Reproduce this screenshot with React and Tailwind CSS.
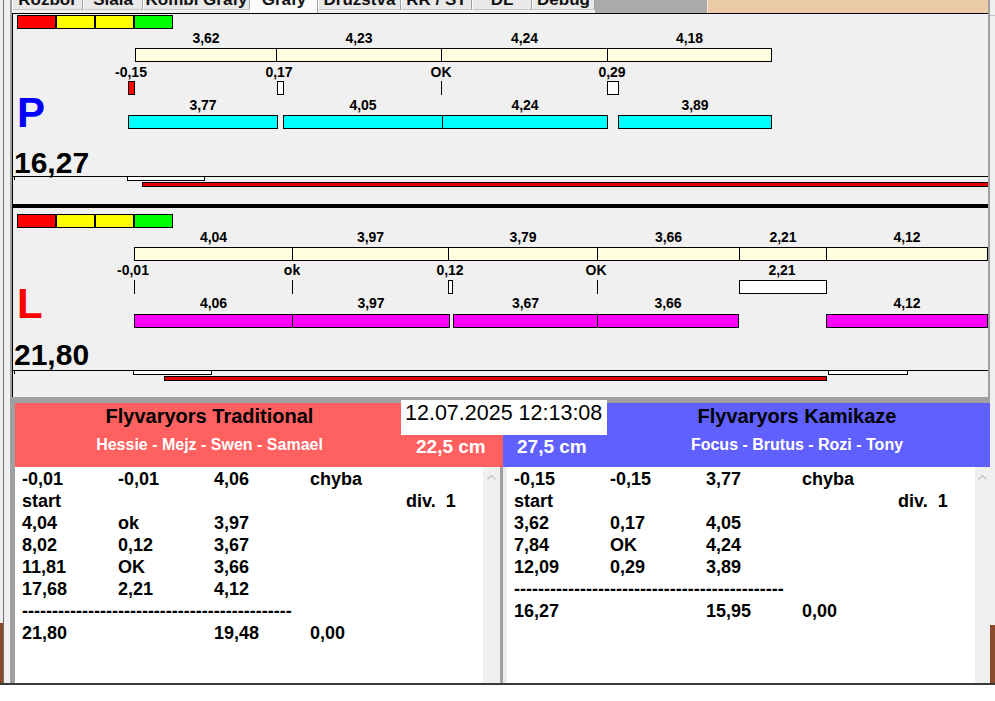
import React from 'react';

const FONT = "'Liberation Sans', Arial, sans-serif";

const TABS = [
  { label: 'Rozbor', w: 'w-[71px]' },
  { label: 'Siala', w: 'w-[60px]' },
  { label: 'Kombi Grafy', w: 'w-[107px]' },
  { label: 'Grafy', w: 'w-[68px]', active: true },
  { label: 'Družstva', w: 'w-[83px]' },
  { label: 'RR / ST', w: 'w-[71px]' },
  { label: 'DL', w: 'w-[60px]' },
  { label: 'Debug', w: 'w-[63px]' },
];

const SQUARES = ['#ff0000', '#ffff00', '#ffff00', '#00ff00'];

// chart lanes, coordinates are page pixels
const LANES = [
  {
    sq: 15,
    topLbl: 43,
    topBar: 48,
    top: [[135, 276, '3,62'], [276, 441, '4,23'], [441, 607, '4,24'], [607, 771, '4,18']],
    markLbl: 77,
    markY: 81,
    marks: [
      { cx: 131, label: '-0,15', box: [128, 134], fill: '#ff0000' },
      { cx: 279, label: '0,17', box: [277, 283], fill: '#ffffff' },
      { cx: 441, label: 'OK', line: 441 },
      { cx: 612, label: '0,29', box: [607, 618], fill: '#ffffff' },
    ],
    botLbl: 110,
    botBar: 115,
    bot: [[128, 277, '3,77'], [283, 442, '4,05'], [442, 607, '4,24'], [618, 771, '3,89']],
    fill: '#00ffff',
    letter: 'P',
    letterColor: '#0000ff',
    letterY: 127,
    total: '16,27',
    totalY: 173,
    lineY: 176,
    white: [[127, 204]],
    red: [142, 988],
  },
  {
    sq: 214,
    topLbl: 242,
    topBar: 247,
    top: [[134, 292, '4,04'], [292, 448, '3,97'], [448, 597, '3,79'], [597, 739, '3,66'], [739, 826, '2,21'], [826, 987, '4,12']],
    markLbl: 275,
    markY: 280,
    marks: [
      { cx: 133, label: '-0,01', line: 134 },
      { cx: 292, label: 'ok', line: 292 },
      { cx: 450, label: '0,12', box: [448, 452], fill: '#ffffff' },
      { cx: 596, label: 'OK', line: 597 },
      { cx: 782, label: '2,21', box: [739, 826], fill: '#ffffff' },
    ],
    botLbl: 308,
    botBar: 314,
    bot: [[134, 292, '4,06'], [292, 449, '3,97'], [453, 597, '3,67'], [597, 738, '3,66'], [826, 987, '4,12']],
    fill: '#ff00ff',
    letter: 'L',
    letterColor: '#ff0000',
    letterY: 318,
    total: '21,80',
    totalY: 365,
    lineY: 370,
    white: [[133, 211], [828, 907]],
    red: [164, 826],
  },
];

const LEFT_ROWS = [
  ['-0,01', '-0,01', '4,06', 'chyba', ''],
  ['start', '', '', '', 'div.  1'],
  ['4,04', 'ok', '3,97'],
  ['8,02', '0,12', '3,67'],
  ['11,81', 'OK', '3,66'],
  ['17,68', '2,21', '4,12'],
  'dash',
  ['21,80', '', '19,48', '0,00'],
];

const RIGHT_ROWS = [
  ['-0,15', '-0,15', '3,77', 'chyba', ''],
  ['start', '', '', '', 'div.  1'],
  ['3,62', '0,17', '4,05'],
  ['7,84', 'OK', '4,24'],
  ['12,09', '0,29', '3,89'],
  'dash',
  ['16,27', '', '15,95', '0,00'],
];

function Lane({ s }) {
  return (
    <g fontFamily={FONT} fontWeight="bold">
      {SQUARES.map((c, i) => (
        <rect key={i} x={17.5 + i * 39} y={s.sq + 0.5} width={38} height={13} fill={c} stroke="#000" />
      ))}

      {s.top.map(([a, b, t]) => (
        <g key={a}>
          <rect x={a + 0.5} y={s.topBar + 0.5} width={b - a} height={13} fill="#ffffe0" stroke="#000" />
          <text x={(a + b) / 2 + 0.5} y={s.topLbl} fontSize="14" textAnchor="middle" fill="#000">{t}</text>
        </g>
      ))}

      {s.marks.map((m) => (
        <g key={m.label + m.cx}>
          <text x={m.cx} y={s.markLbl} fontSize="14" textAnchor="middle" fill="#000">{m.label}</text>
          {m.box ? (
            <rect x={m.box[0] + 0.5} y={s.markY + 0.5} width={m.box[1] - m.box[0]} height={13} fill={m.fill} stroke="#000" />
          ) : (
            <line x1={m.line + 0.5} y1={s.markY} x2={m.line + 0.5} y2={s.markY + 14} stroke="#000" />
          )}
        </g>
      ))}

      {s.bot.map(([a, b, t]) => (
        <g key={a}>
          <rect x={a + 0.5} y={s.botBar + 0.5} width={b - a} height={13} fill={s.fill} stroke="#000" />
          <text x={(a + b) / 2 + 0.5} y={s.botLbl} fontSize="14" textAnchor="middle" fill="#000">{t}</text>
        </g>
      ))}

      <text x={17} y={s.letterY} fontSize="42" fill={s.letterColor}>{s.letter}</text>
      <text x={14} y={s.totalY} fontSize="30" fill="#000">{s.total}</text>

      {/* progress strip */}
      <line x1={13} y1={s.lineY + 0.5} x2={988} y2={s.lineY + 0.5} stroke="#000" />
      <line x1={14.5} y1={s.lineY} x2={14.5} y2={s.lineY + 4} stroke="#000" />
      {s.white.map(([a, b]) => (
        <rect key={a} x={a + 0.5} y={s.lineY + 0.5} width={b - a} height={4} fill="#fff" stroke="#000" />
      ))}
      <rect x={s.red[0] + 0.5} y={s.lineY + 6.5} width={s.red[1] - s.red[0]} height={4} fill="#e00000" stroke="#000" />
    </g>
  );
}

function Table({ rows }) {
  return (
    <div className="flex-1 bg-white pt-[1px] text-[18px] leading-[22px] font-bold text-black">
      {rows.map((r, i) =>
        r === 'dash' ? (
          <div key={i} className="h-[22px] pl-[7px] whitespace-pre">{'-'.repeat(45)}</div>
        ) : (
          <div key={i} className="flex h-[22px] pl-[7px] whitespace-pre">
            <span className="w-[96px] shrink-0">{r[0]}</span>
            <span className="w-[96px] shrink-0">{r[1] || ''}</span>
            <span className="w-[96px] shrink-0">{r[2] || ''}</span>
            <span className="w-[96px] shrink-0">{r[3] || ''}</span>
            <span>{r[4] || ''}</span>
          </div>
        )
      )}
    </div>
  );
}

function ScrollBar({ w }) {
  return (
    <div className={`${w} bg-[#f0f0f0] flex justify-center pt-[7px]`}>
      <svg width="9" height="6" viewBox="0 0 9 6">
        <path d="M0.5 5.5 L4.5 1.5 L8.5 5.5" stroke="#c4c4c4" strokeWidth="1.2" fill="none" />
      </svg>
    </div>
  );
}

export default function App() {
  return (
    <div className="w-[995px] h-[701px] bg-white overflow-hidden flex flex-col" style={{ fontFamily: FONT }}>
      <div className="flex h-[683px]">
        {/* left edge of the window behind */}
        <div className="w-[10px] flex bg-[#f0f0f0]">
          <div className="w-[3px] flex flex-col justify-end">
            <div className="h-[60px] bg-[#8a4a2a]" />
          </div>
          <div className="w-[1px] bg-[#6e6e6e]" />
          <div className="flex-1" />
        </div>

        <div className="w-[980px] flex flex-col">
          {/* tabs */}
          <div className="flex h-[13px] bg-[#f0f0f0]">
            <div className="w-[2px] bg-[#a0a0a0]" />
            {TABS.map((t) => (
              <div
                key={t.label}
                className={`${t.w} overflow-hidden border-l border-l-white border-r border-r-[#a0a0a0] ${
                  t.active ? 'h-[13px] bg-[#fbfbfb]' : 'h-[10px] bg-[#e9e9e9] border-b border-b-[#c8c8c8]'
                }`}
              >
                <div className="-mt-[9px] text-center text-[17px] leading-[17px] font-bold text-[#111] whitespace-nowrap">
                  {t.label}
                </div>
              </div>
            ))}
            <div className="w-[112px] bg-[#ababab]" />
            <div className="w-[281px] bg-[#ebcaa8] border-l border-l-[#f6e8da]" />
            <div className="w-[2px] bg-[#a0a0a0]" />
          </div>

          {/* chart area */}
          <div className="flex border-l-2 border-[#a0a0a0] border-r-2 border-r-[#a0a0a0]">
            <div className="w-[1px] bg-black" />
            <div className="flex flex-col bg-[#f0f0f0]">
              <div className="h-[1px] bg-black" />
              <svg width="975" height="383" viewBox="13 14 975 383" className="block">
                <rect x="13" y="14" width="975" height="383" fill="#f0f0f0" />
                <Lane s={LANES[0]} />
                <rect x="13" y="204" width="975" height="4" fill="#000" />
                <Lane s={LANES[1]} />
              </svg>
            </div>
          </div>

          {/* teams */}
          <div className="relative h-[286px] bg-[#a0a0a0] pt-[6px] pl-[5px]">
            <div className="flex h-[64px]">
              <div className="flex w-[488px] bg-[#ff6060]">
                <div className="w-[389px] flex flex-col items-center pt-[2px]">
                  <div className="text-[20px] leading-[23px] font-bold text-black">Flyvaryors Traditional</div>
                  <div className="mt-[7px] text-[16px] leading-[19px] font-bold text-white">Hessie - Mejz - Swen - Samael</div>
                </div>
                <div className="flex-1 pt-[33px] pl-[12px] text-[19px] leading-[22px] font-bold text-white">22,5 cm</div>
              </div>
              <div className="flex w-[487px] bg-[#6060ff]">
                <div className="w-[104px] pt-[33px] pl-[14px] text-[19px] leading-[22px] font-bold text-white">27,5 cm</div>
                <div className="w-[380px] flex flex-col items-center pt-[2px]">
                  <div className="text-[20px] leading-[23px] font-bold text-black">Flyvaryors Kamikaze</div>
                  <div className="mt-[7px] text-[16px] leading-[19px] font-bold text-white">Focus - Brutus - Rozi - Tony</div>
                </div>
              </div>
            </div>

            <div className="flex h-[216px]">
              <div className="flex w-[485px]">
                <Table rows={LEFT_ROWS} />
                <ScrollBar w="w-[17px]" />
              </div>
              <div className="w-[3px]" />
              <div className="w-[4px] bg-[#ececec]" />
              <div className="flex w-[483px]">
                <Table rows={RIGHT_ROWS} />
                <ScrollBar w="w-[15px]" />
              </div>
            </div>

            <div className="absolute left-[391px] top-[3px] w-[206px] h-[35px] bg-white pl-[4px] pt-[1px] text-[21.5px] leading-[24px] text-black">
              12.07.2025 12:13:08
            </div>
          </div>
        </div>

        {/* right edge */}
        <div className="w-[5px] flex flex-col bg-[#f0f0f0]">
          <div className="h-[15px]" />
          <div className="h-[1px] bg-[#c0c0c0]" />
          <div className="flex-1" />
          <div className="h-[58px] bg-[#8a4a2a]" />
        </div>
      </div>
      <div className="h-[2px] bg-[#3a3a3a]" />
      <div className="flex-1 bg-white" />
    </div>
  );
}
